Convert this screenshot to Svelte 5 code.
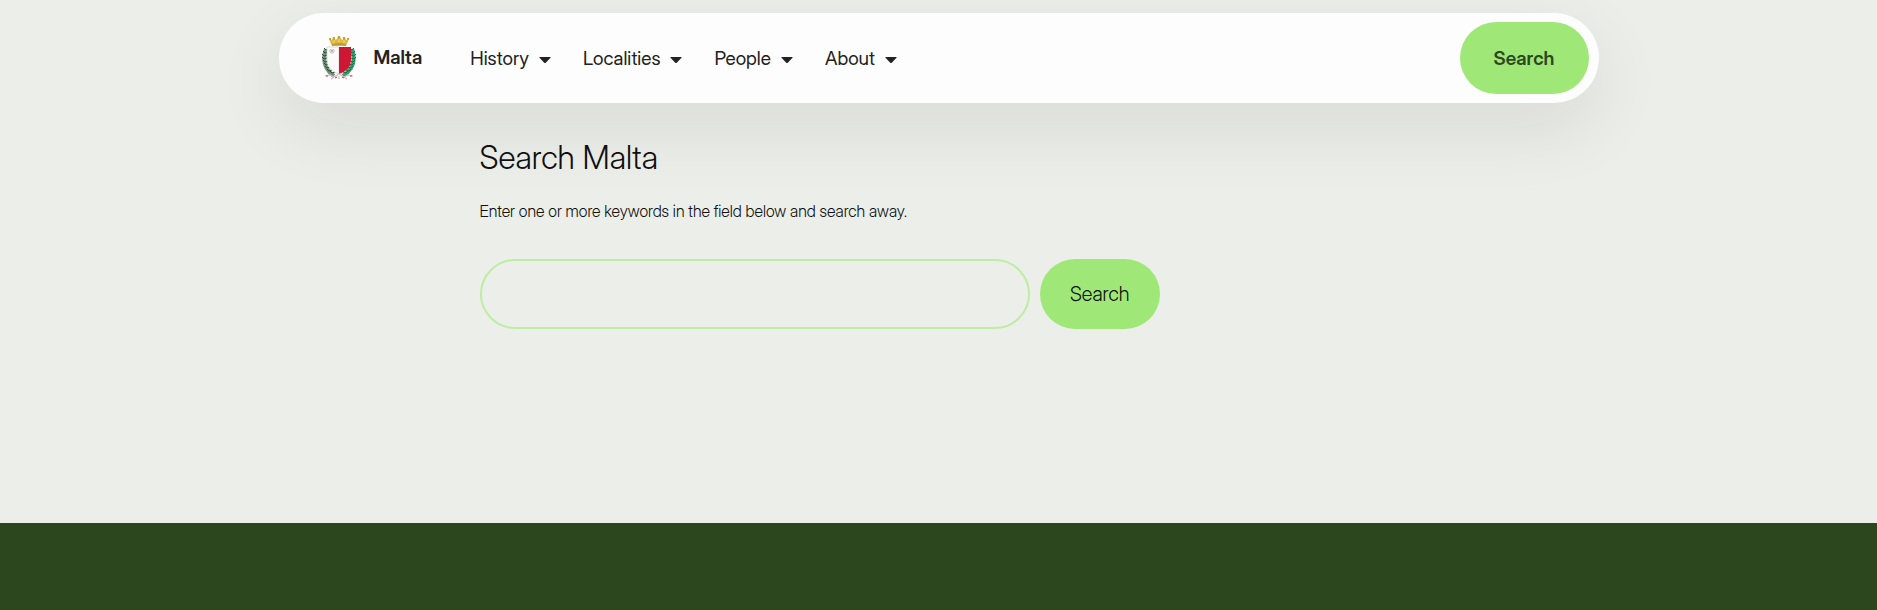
<script>
  const menu = ['History', 'Localities', 'People', 'About'];
  const leaves = [[5,15],[4,18],[3,21],[3,24],[4,27],[5,30],[6,33],[8,36],[11,38]];
</script>

<div class="page">
  <header class="bar">
    <a class="brand" href="#home">
      <svg class="crest" viewBox="0 0 36 46" aria-hidden="true">
        <path d="M8 4l3 1 1-3 2 3 2-1 1-3 1 3 1-3 1 3 2 1 2-3 1 3 3-1-3 7H11z" fill="#dcb845" />
        <path d="M8 3h2v2H8zM12 2h2v3h-2zM17 1h2v3h-2zM22 2h2v3h-2zM26 3h2v2h-2z" fill="#cfa22c" />
        <path d="M11 9q7-2 14 0v2q-7-2-14 0z" fill="#c59a35" />
        <path d="M13 5v3M18 4v3M23 5v3" stroke="#f4dc78" />
        <path d="M5 14Q-1 31 13 41" fill="none" stroke="#6f917a" stroke-width="4" />
        <path d="M31 14Q37 31 22 41" fill="none" stroke="#3f9c6d" stroke-width="4" />
        {#each leaves as [x, y]}
          <path d="M{x} {y}l-2-2m2 2l3-1" stroke="#2e513a" stroke-width="1" />
          <path d="M{36 - x} {y}l2-2m-2 2l-3-1" stroke="#127346" stroke-width="1" />
        {/each}
        <path d="M6 12h12v27Q6 35 6 25z" fill="#fafafa" stroke="#c9c9c9" stroke-width=".6" />
        <path d="M18 12h12v13q0 10-12 14z" fill="#ce1733" />
        <path d="M11 14v5M8 16h6M9 14l4 4M13 14l-4 4" stroke="#b3a8ab" stroke-width=".7" />
        <path d="M4 41l5-1 4 2 5-3 5 3 4-2 5 1M13 42l-3 2M23 42l3 2M18 41v3" fill="none" stroke="#d3bcbe" stroke-width="1.2" />
        <path d="M5 41h2M14 43l2-1M21 42l2 1M29 41h2" stroke="#b83f50" />
      </svg>
      <span>Malta</span>
    </a>
    <nav aria-label="Main">
      {#each menu as item}
        <button class="menu" type="button">
          {item}
          <svg class="caret" viewBox="0 0 12 6" aria-hidden="true"><path d="M1 0h10q1 0 .5.8L7 5.4Q6 6.4 5 5.4L.5.8Q0 0 1 0z" fill="currentColor" /></svg>
        </button>
      {/each}
    </nav>
    <a class="cta" href="#search">Search</a>
  </header>

  <main id="search">
    <h1>Search Malta</h1>
    <p>Enter one or more keywords in the field below and search away.</p>
    <form role="search" onsubmit={(e) => e.preventDefault()}>
      <input type="search" aria-label="Keywords" />
      <button class="submit" type="submit">Search</button>
    </form>
  </main>
  <footer></footer>
</div>

<style>
  :global(body) { margin: 0; background: #eceee9; }
  .page {
    box-sizing: border-box;
    min-height: 100vh;
    display: flex;
    flex-direction: column;
    padding-top: 13px;
    font-family: "Inter Display", Inter, "Liberation Sans", sans-serif;
    color: #101010;
  }
  .bar {
    box-sizing: border-box;
    width: calc(100% - 32px);
    max-width: 1320px;
    margin: 0 auto;
    padding: 9px 10px 9px 42px;
    display: flex;
    align-items: center;
    border-radius: 45px;
    background: #fdfdfd;
    box-shadow: 0 24px 72px rgba(20, 30, 15, 0.09);
    color: #222;
  }
  .brand { display: flex; align-items: center; gap: 17px; color: inherit; text-decoration: none; font-size: 19px; line-height: 24px; font-weight: 600; }
  .crest { width: 36px; height: 46px; }
  nav { display: flex; gap: 32px; margin-left: 48px; }
  button { font-family: inherit; border: 0; cursor: pointer; }
  .menu { display: flex; align-items: center; gap: 10px; padding: 2px 0 0; background: none; color: inherit; font-size: 19px; line-height: 24px; }
  .caret { width: 12px; height: 6px; margin-top: 2px; }
  .cta {
    margin-left: auto;
    padding: 25px 34px 23px;
    border-radius: 36px;
    background: #9fe878;
    color: #2c471d;
    font-size: 19px;
    line-height: 24px;
    font-weight: 600;
    text-decoration: none;
  }
  main { box-sizing: border-box; width: calc(100% - 32px); max-width: 918px; margin: 0 auto; padding: 35px 0 194px; }
  h1 { margin: 0; font-size: 32px; line-height: 40px; font-weight: 300; }
  p { margin: 21px 0 36px; font-size: 16px; line-height: 24px; font-weight: 300; }
  form { display: flex; gap: 10px; max-width: 680px; }
  input { box-sizing: border-box; flex: 1; min-width: 0; height: 70px; padding: 0 32px; border: 2px solid #bdeca3; border-radius: 35px; background: transparent; font: inherit; font-size: 20px; appearance: none; }
  .submit { padding: 23px 30px; border-radius: 35px; background: #9fe878; color: #101010; font-size: 20px; line-height: 24px; font-weight: 300; }
  footer { flex: 1; min-height: 87px; background: #2c471d; }
</style>
